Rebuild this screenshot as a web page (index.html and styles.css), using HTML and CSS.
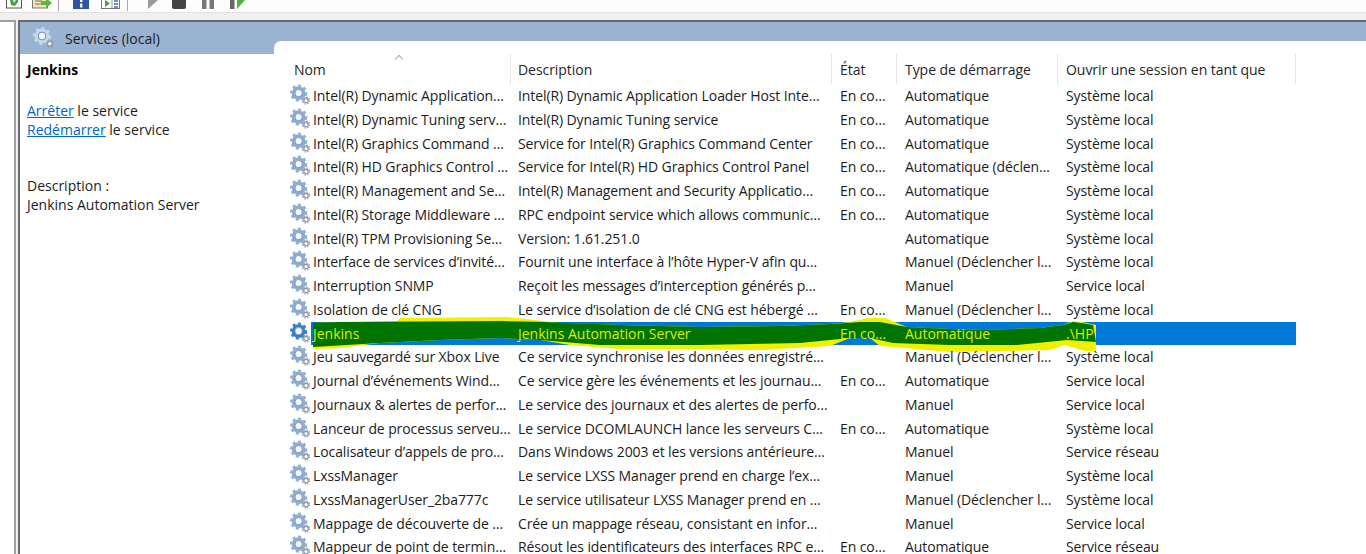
FILE: index.html
```html
<!DOCTYPE html>
<html lang="fr">
<head>
    <meta charset="UTF-8">
    <title>Services (local)</title>
    <link rel="stylesheet" href="styles.css">
</head>
<body>
    <svg class="defs" width="0" height="0">
        <symbol id="gear" viewBox="0 0 22 22">
            <circle cx="9" cy="9" r="7.8" fill="none" stroke="currentColor" stroke-width="2.4" stroke-dasharray="3 3"/>
            <circle cx="9" cy="9" r="5.6" fill="none" stroke="currentColor" stroke-width="3.2"/>
            <circle cx="9" cy="9" r="3.9" fill="#f4f8fc" stroke="#5f83b0" stroke-width="0.9"/>
            <circle cx="16.8" cy="16.8" r="3.6" fill="none" stroke="#9aa6b4" stroke-width="1.6" stroke-dasharray="1.6 1.2"/>
            <circle cx="16.8" cy="16.8" r="2.3" fill="#fff" stroke="#8794a3" stroke-width="1.2"/>
        </symbol>
    </svg>

    <div class="toolbar">
        <svg class="tool tool-a" viewBox="0 0 16 9"><rect x="0.5" y="-4" width="15" height="12" fill="#fff" stroke="#555"/><path d="M4 0 L5 5 L9 6 L12 2 L12 0 L10 0 L8 3 L7 0 Z" fill="#3fa34a"/></svg>
        <svg class="tool tool-b" viewBox="0 0 20 9"><rect x="0.5" y="-4" width="15" height="12" fill="#f1e3b4" stroke="#777"/><path d="M3 1 H10 M3 4 H10" stroke="#777"/><path d="M9 1 H14 V-2 L20 3 L14 8 V5 H9 Z" fill="#58b947"/></svg>
        <span class="tool-sep"></span>
        <svg class="tool tool-c" viewBox="0 0 16 9"><rect x="0" y="-4" width="16" height="13" fill="#2e55a8"/><rect x="7" y="0" width="2.4" height="2" fill="#fff"/><rect x="7" y="3.5" width="2.4" height="4" fill="#fff"/></svg>
        <svg class="tool tool-d" viewBox="0 0 19 9"><rect x="0.5" y="-4" width="18" height="12.5" fill="#fff" stroke="#777"/><path d="M4 0 L9 3.5 L4 7 Z" fill="#3fa34a"/><path d="M11 0 V8" stroke="#999"/><path d="M13 1 H17 M13 4 H17 M13 7 H17" stroke="#3a6fb5" stroke-width="1.4"/></svg>
        <span class="tool-sep tool-sep-2"></span>
        <svg class="tool tool-e" viewBox="0 0 10 9"><path d="M0 0 H10 L0 9 Z" fill="#9a9a9a"/></svg>
        <svg class="tool tool-f" viewBox="0 0 14 9"><path d="M0 0 H14 V7 Q14 9 12 9 H2 Q0 9 0 7 Z" fill="#444"/></svg>
        <svg class="tool tool-g" viewBox="0 0 12 9"><rect x="0" width="4.5" height="9" fill="#777"/><rect x="7.5" width="4.5" height="9" fill="#777"/></svg>
        <svg class="tool tool-h" viewBox="0 0 15 9"><rect x="0" width="4.5" height="9" fill="#666"/><path d="M7 0 H15 L7 9 Z" fill="#4fb33f"/></svg>
    </div>
    <div class="band"></div>

    <div class="workspace">
        <div class="tree"></div>
        <div class="panel">
            <div class="panel-head">
                <svg class="head-icon"><use href="#gear"/></svg>
                <span>Services (local)</span>
            </div>
            <div class="panel-body">
                <aside class="details">
                    <h2>Jenkins</h2>
                    <p class="actions"><a href="#">Arrêter</a> le service<br><a href="#">Redémarrer</a> le service</p>
                    <p class="desc">Description :<br>Jenkins Automation Server</p>
                </aside>
                <section class="list">
                    <div class="list-head">
                        <span class="sort-arrow"></span>
                        <div>Nom</div>
                        <div>Description</div>
                        <div>État</div>
                        <div>Type de démarrage</div>
                        <div>Ouvrir une session en tant que</div>
                    </div>

                    <div class="row"><svg class="gear"><use href="#gear"/></svg><div class="cells"><div>Intel(R) Dynamic Application…</div><div>Intel(R) Dynamic Application Loader Host Inte…</div><div>En co…</div><div>Automatique</div><div>Système local</div></div></div>
                    <div class="row"><svg class="gear"><use href="#gear"/></svg><div class="cells"><div>Intel(R) Dynamic Tuning serv…</div><div>Intel(R) Dynamic Tuning service</div><div>En co…</div><div>Automatique</div><div>Système local</div></div></div>
                    <div class="row"><svg class="gear"><use href="#gear"/></svg><div class="cells"><div>Intel(R) Graphics Command …</div><div>Service for Intel(R) Graphics Command Center</div><div>En co…</div><div>Automatique</div><div>Système local</div></div></div>
                    <div class="row"><svg class="gear"><use href="#gear"/></svg><div class="cells"><div>Intel(R) HD Graphics Control …</div><div>Service for Intel(R) HD Graphics Control Panel</div><div>En co…</div><div>Automatique (déclen…</div><div>Système local</div></div></div>
                    <div class="row"><svg class="gear"><use href="#gear"/></svg><div class="cells"><div>Intel(R) Management and Se…</div><div>Intel(R) Management and Security Applicatio…</div><div>En co…</div><div>Automatique</div><div>Système local</div></div></div>
                    <div class="row"><svg class="gear"><use href="#gear"/></svg><div class="cells"><div>Intel(R) Storage Middleware …</div><div>RPC endpoint service which allows communic…</div><div>En co…</div><div>Automatique</div><div>Système local</div></div></div>
                    <div class="row"><svg class="gear"><use href="#gear"/></svg><div class="cells"><div>Intel(R) TPM Provisioning Se…</div><div>Version: 1.61.251.0</div><div></div><div>Automatique</div><div>Système local</div></div></div>
                    <div class="row"><svg class="gear"><use href="#gear"/></svg><div class="cells"><div>Interface de services d’invité…</div><div>Fournit une interface à l’hôte Hyper-V afin qu…</div><div></div><div>Manuel (Déclencher l…</div><div>Système local</div></div></div>
                    <div class="row"><svg class="gear"><use href="#gear"/></svg><div class="cells"><div>Interruption SNMP</div><div>Reçoit les messages d’interception générés p…</div><div></div><div>Manuel</div><div>Service local</div></div></div>
                    <div class="row"><svg class="gear"><use href="#gear"/></svg><div class="cells"><div>Isolation de clé CNG</div><div>Le service d’isolation de clé CNG est hébergé …</div><div>En co…</div><div>Manuel (Déclencher l…</div><div>Système local</div></div></div>

                    <div class="row selected"><svg class="gear"><use href="#gear"/></svg><div class="cells">
                        <svg class="scribble" viewBox="311 310 985 45" width="985" height="45">
                            <path fill="#eef200" d="M313 323 L397 321 L400 318 L507 317 L560 323 L620 325 L700 327 L780 326 L830 324 L850 322 L868 318 L885 318 L907 327 L950 329 L983 330 L1040 328 L1063 325 L1073 321 L1082 322 L1096 325 L1096 351 L1085 351 L1065 345 L1050 350 L950 352 L880 346 L870 338 L850 338 L830 346 L760 350 L620 349 L570 345 L540 340 L500 338 L440 340 L380 343 L340 348 L313 349 Z"/>
                            <path fill="#007400" d="M313 323 L340 322 L500 321 L545 322 L620 325 L700 327 L780 326 L830 324 L860 322 L880 322 L907 327 L950 329 L983 330 L1040 328 L1063 325 L1073 322 L1082 323 L1093 325 L1096 342 L1067 340 L1017 345 L950 345 L893 343 L870 338 L850 338 L800 343 L700 345 L600 345 L540 340 L500 338 L440 340 L380 343 L313 347 Z"/>
                        </svg>
                        <div>Jenkins</div><div>Jenkins Automation Server</div><div>En co…</div><div>Automatique</div><div>.\HP</div></div></div>

                    <div class="row"><svg class="gear"><use href="#gear"/></svg><div class="cells"><div>Jeu sauvegardé sur Xbox Live</div><div>Ce service synchronise les données enregistré…</div><div></div><div>Manuel (Déclencher l…</div><div>Système local</div></div></div>
                    <div class="row"><svg class="gear"><use href="#gear"/></svg><div class="cells"><div>Journal d’événements Wind…</div><div>Ce service gère les événements et les journau…</div><div>En co…</div><div>Automatique</div><div>Service local</div></div></div>
                    <div class="row"><svg class="gear"><use href="#gear"/></svg><div class="cells"><div>Journaux &amp; alertes de perfor…</div><div>Le service des journaux et des alertes de perfo…</div><div></div><div>Manuel</div><div>Service local</div></div></div>
                    <div class="row"><svg class="gear"><use href="#gear"/></svg><div class="cells"><div>Lanceur de processus serveu…</div><div>Le service DCOMLAUNCH lance les serveurs C…</div><div>En co…</div><div>Automatique</div><div>Système local</div></div></div>
                    <div class="row"><svg class="gear"><use href="#gear"/></svg><div class="cells"><div>Localisateur d’appels de pro…</div><div>Dans Windows 2003 et les versions antérieure…</div><div></div><div>Manuel</div><div>Service réseau</div></div></div>
                    <div class="row"><svg class="gear"><use href="#gear"/></svg><div class="cells"><div>LxssManager</div><div>Le service LXSS Manager prend en charge l’ex…</div><div></div><div>Manuel</div><div>Système local</div></div></div>
                    <div class="row"><svg class="gear"><use href="#gear"/></svg><div class="cells"><div>LxssManagerUser_2ba777c</div><div>Le service utilisateur LXSS Manager prend en …</div><div></div><div>Manuel (Déclencher l…</div><div>Système local</div></div></div>
                    <div class="row"><svg class="gear"><use href="#gear"/></svg><div class="cells"><div>Mappage de découverte de …</div><div>Crée un mappage réseau, consistant en infor…</div><div></div><div>Manuel</div><div>Service local</div></div></div>
                    <div class="row"><svg class="gear"><use href="#gear"/></svg><div class="cells"><div>Mappeur de point de termin…</div><div>Résout les identificateurs des interfaces RPC e…</div><div>En co…</div><div>Automatique</div><div>Service réseau</div></div></div>
                </section>
            </div>
        </div>
    </div>
</body>
</html>
```

FILE: styles.css
```css
* {
    box-sizing: border-box;
}

html, body {
    height: 100%;
}

body {
    margin: 0;
    overflow: hidden;
    display: flex;
    flex-direction: column;
    background: #fff;
    color: #1c1c1c;
    font-family: "Open Sans", "Noto Sans", sans-serif;
    font-size: 14px;
}

.defs {
    position: absolute;
}

/* Toolbar, cut off by the top of the picture */
.toolbar {
    flex: none;
    height: 12px;
    display: flex;
    align-items: flex-start;
    background: #fdfdfd;
}

.tool {
    height: 9px;
    flex: none;
}

.tool-a { width: 16px; margin-left: 6px; }
.tool-b { width: 20px; margin-left: 10px; }
.tool-c { width: 16px; margin-left: 14px; }
.tool-d { width: 19px; margin-left: 12px; }
.tool-e { width: 10px; margin-left: 20px; }
.tool-f { width: 14px; margin-left: 14px; }
.tool-g { width: 12px; margin-left: 16px; }
.tool-h { width: 15px; margin-left: 16px; }

.tool-sep {
    width: 1px;
    height: 11px;
    margin-left: 6px;
    background: #a8a8a8;
}

.tool-sep-2 {
    margin-left: 7px;
}

.band {
    flex: none;
    height: 8px;
    background: #f0f0f0;
    border-top: 1px solid #e2e2e2;
}

.workspace {
    flex: 1;
    min-height: 0;
    display: flex;
    background: #f0f0f0;
}

.tree {
    width: 16px;
    background: #fff;
    border-top: 2px solid #a0a0a0;
    border-right: 2px solid #a0a0a0;
}

.panel {
    flex: 1;
    min-width: 0;
    margin-left: 2px;
    display: flex;
    flex-direction: column;
    background: #fff;
    border-top: 2px solid #696969;
    border-left: 2px solid #696969;
}

.panel-head {
    flex: none;
    height: 32px;
    display: flex;
    align-items: center;
    gap: 10px;
    padding: 0 0 0 13px;
    background: #9ab3d2;
    font-size: 14px;
}

.head-icon {
    width: 22px;
    height: 22px;
    color: #c4d9ef;
}

.panel-body {
    flex: 1;
    min-height: 0;
    display: flex;
}

.details {
    flex: none;
    width: 254px;
    padding: 6px 7px;
    line-height: 19px;
}

.details h2 {
    margin: 0;
    font-size: 14px;
    font-weight: 700;
    color: #000;
    line-height: 20px;
}

.details p {
    margin: 0;
}

.details .actions {
    margin-top: 21px;
}

.details .desc {
    margin-top: 37px;
}

.details a {
    color: #0066cc;
}

/* White list pane rises into the blue header, like a tab */
.list {
    flex: 1;
    min-width: 0;
    margin-top: -13px;
    padding-left: 16px;
    background: #fff;
    border-top-left-radius: 7px;
    position: relative;
}

.list-head {
    width: 1006px;
    height: 43px;
    padding-top: 13px;
    display: grid;
    grid-template-columns: 221px 321px 65px 161px 238px;
    line-height: 28px;
    letter-spacing: -0.05px;
}

.list-head > div {
    padding: 2px 0 0 8px;
    border-right: 1px solid #e5e5e5;
    white-space: nowrap;
    color: #262626;
}

.list-head > div:nth-of-type(1) {
    padding-left: 4px;
}

.list-head > div:nth-of-type(2) {
    padding-left: 7px;
}

.sort-arrow {
    position: absolute;
    left: 122px;
    top: 15px;
    width: 6px;
    height: 6px;
    border-top: 1px solid #aaa;
    border-left: 1px solid #aaa;
    transform: rotate(45deg);
}

.row {
    width: 1006px;
    height: 23.75px;
    display: flex;
    line-height: 23.75px;
}

.gear {
    flex: none;
    width: 21px;
    height: 22px;
    color: #8fadd0;
}

.cells {
    flex: 1;
    display: grid;
    grid-template-columns: 199px 321px 65px 161px 239px;
    white-space: nowrap;
    letter-spacing: -0.1px;
}

.cells > div {
    overflow: hidden;
    padding-left: 9px;
    position: relative;
}

.cells > div:nth-of-type(1) {
    padding-left: 2px;
}

.cells > div:nth-of-type(2) {
    padding-left: 8px;
}

.selected .gear {
    color: #2f7fd0;
}

.selected .cells {
    position: relative;
    background: #0078d7;
    color: #d8f000;
    letter-spacing: 0;
}

.scribble {
    position: absolute;
    left: 0;
    top: -11.5px;
    overflow: visible;
}
```
